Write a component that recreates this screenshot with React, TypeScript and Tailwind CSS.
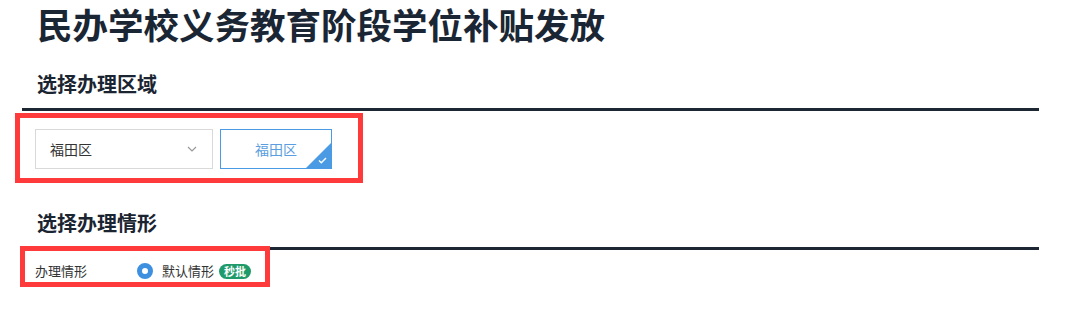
import React from "react";

const font = { fontFamily: '"Noto Sans CJK SC", "Noto Sans", sans-serif' };

function SectionHeading({ children }: { children: React.ReactNode }) {
  return (
    <div>
      <h2 className="pl-[15px] text-[20px] font-bold leading-[28px] text-[#1b2531]">{children}</h2>
      <div className="mt-[10px] h-[3px] bg-[#1c2733]" />
    </div>
  );
}

export default function App() {
  return (
    <div className="relative h-[324px] w-[1080px] overflow-hidden bg-white" style={font}>
      <div className="w-[1039px] pl-[22px]">
        <h1 className="whitespace-nowrap pl-[15px] text-[35.5px] font-bold leading-[48px] text-[#1a2634]">
          民办学校义务教育阶段学位补贴发放
        </h1>

        <div className="mt-[22px]">
          <SectionHeading>选择办理区域</SectionHeading>
        </div>

        {/* region picker */}
        <div className="mt-[18px] flex items-center gap-[7px] pl-[13px]">
          <div className="flex h-[40px] w-[178px] items-center justify-between border border-[#d9d9d9] px-[14px]">
            <span className="text-[14px] text-[#333]">福田区</span>
            <svg width="10" height="6" viewBox="0 0 10 6" className="mr-[1px]">
              <path d="M1 1l4 4 4-4" fill="none" stroke="#999" strokeWidth="1.2" />
            </svg>
          </div>
          <div className="relative flex h-[40px] w-[112px] items-center justify-center overflow-hidden border-[1.5px] border-[#4a9be3]">
            <span className="text-[14px] text-[#5b9ee0]">福田区</span>
            <div className="absolute bottom-0 right-0 h-[25px] w-[25px] bg-[#4a9be3] [clip-path:polygon(100%_0,100%_100%,0_100%)]" />
            <svg width="9" height="7" viewBox="0 0 9 7" className="absolute bottom-[4px] right-[4px]">
              <path d="M1 3.5l2.3 2.3L8 1" fill="none" stroke="#fff" strokeWidth="1.4" />
            </svg>
          </div>
        </div>

        <div className="mt-[40px]">
          <SectionHeading>选择办理情形</SectionHeading>
        </div>

        {/* situation */}
        <div className="mt-[7px] flex h-[28px] items-center pl-[13px] text-[13px] text-[#333]">
          <span className="w-[102px]">办理情形</span>
          <span className="h-[16px] w-[16px] rounded-full border-[5px] border-[#3d8fe0] bg-white" />
          <span className="ml-[9px]">默认情形</span>
          <span className="ml-[5px] rounded-full bg-[#1f9a6a] px-[5px] text-[11px] font-bold leading-[15px] text-white">
            秒批
          </span>
        </div>
      </div>

      {/* annotation boxes */}
      <div className="pointer-events-none absolute left-[15px] top-[113px] h-[70px] w-[348px] border-[5px] border-[#ff3a3a]" />
      <div className="pointer-events-none absolute left-[20px] top-[246px] h-[41px] w-[250px] border-[5px] border-[#ff3a3a]" />
    </div>
  );
}
